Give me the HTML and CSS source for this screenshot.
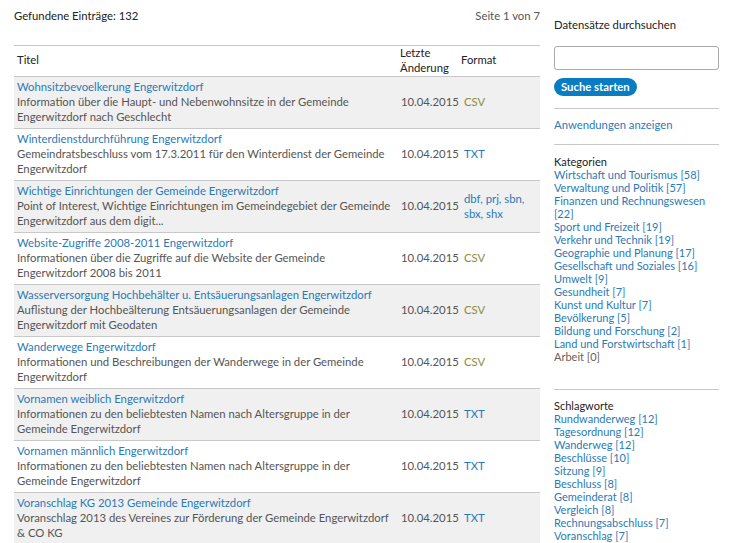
FILE: index.html
```html
<!DOCTYPE html>
<html lang="de">
<head>
<meta charset="utf-8">
<title>Datensätze</title>
<link rel="stylesheet" href="styles.css">
</head>
<body>
<div class="page">
  <main class="main">
    <div class="topbar">
      <span>Gefundene Einträge: 132</span>
      <span class="pages">Seite 1 von 7</span>
    </div>
    <table class="results">
      <thead>
        <tr><th class="c-title">Titel</th><th class="c-date">Letzte Änderung</th><th class="c-fmt">Format</th></tr>
      </thead>
      <tbody>
        <tr class="odd"><td><a>Wohnsitzbevoelkerung Engerwitzdorf</a><br>Information über die Haupt- und Nebenwohnsitze in der Gemeinde Engerwitzdorf nach Geschlecht</td><td>10.04.2015</td><td class="f-csv">CSV</td></tr>
        <tr><td><a>Winterdienstdurchführung Engerwitzdorf</a><br>Gemeindratsbeschluss vom 17.3.2011 für den Winterdienst der Gemeinde Engerwitzdorf</td><td>10.04.2015</td><td class="f-blue">TXT</td></tr>
        <tr class="odd"><td><a>Wichtige Einrichtungen der Gemeinde Engerwitzdorf</a><br>Point of Interest, Wichtige Einrichtungen im Gemeindegebiet der Gemeinde Engerwitzdorf aus dem digit...</td><td>10.04.2015</td><td class="f-blue">dbf, prj, sbn, sbx, shx</td></tr>
        <tr><td><a>Website-Zugriffe 2008-2011 Engerwitzdorf</a><br>Informationen über die Zugriffe auf die Website der Gemeinde Engerwitzdorf 2008 bis 2011</td><td>10.04.2015</td><td class="f-csv">CSV</td></tr>
        <tr class="odd"><td><a>Wasserversorgung Hochbehälter u. Entsäuerungsanlagen Engerwitzdorf</a><br>Auflistung der Hochbeälterung Entsäuerungsanlagen der Gemeinde Engerwitzdorf mit Geodaten</td><td>10.04.2015</td><td class="f-csv">CSV</td></tr>
        <tr><td><a>Wanderwege Engerwitzdorf</a><br>Informationen und Beschreibungen der Wanderwege in der Gemeinde Engerwitzdorf</td><td>10.04.2015</td><td class="f-csv">CSV</td></tr>
        <tr class="odd"><td><a>Vornamen weiblich Engerwitzdorf</a><br>Informationen zu den beliebtesten Namen nach Altersgruppe in der Gemeinde Engerwitzdorf</td><td>10.04.2015</td><td class="f-blue">TXT</td></tr>
        <tr><td><a>Vornamen männlich Engerwitzdorf</a><br>Informationen zu den beliebtesten Namen nach Altersgruppe in der Gemeinde Engerwitzdorf</td><td>10.04.2015</td><td class="f-blue">TXT</td></tr>
        <tr class="odd"><td><a>Voranschlag KG 2013 Gemeinde Engerwitzdorf</a><br>Voranschlag 2013 des Vereines zur Förderung der Gemeinde Engerwitzdorf &amp; CO KG</td><td>10.04.2015</td><td class="f-blue">TXT</td></tr>
      </tbody>
    </table>
  </main>
  <aside class="side">
    <div class="side-title">Datensätze durchsuchen</div>
    <input class="search" type="text">
    <button class="btn">Suche starten</button>
    <hr class="rule">
    <a class="side-link">Anwendungen anzeigen</a>
    <hr class="rule">
    <div class="block">
      <div class="block-title">Kategorien</div>
      <ul class="list">
        <li><a>Wirtschaft und Tourismus [58]</a></li>
        <li><a>Verwaltung und Politik [57]</a></li>
        <li><a>Finanzen und Rechnungswesen [22]</a></li>
        <li><a>Sport und Freizeit [19]</a></li>
        <li><a>Verkehr und Technik [19]</a></li>
        <li><a>Geographie und Planung [17]</a></li>
        <li><a>Gesellschaft und Soziales [16]</a></li>
        <li><a>Umwelt [9]</a></li>
        <li><a>Gesundheit [7]</a></li>
        <li><a>Kunst und Kultur [7]</a></li>
        <li><a>Bevölkerung [5]</a></li>
        <li><a>Bildung und Forschung [2]</a></li>
        <li><a>Land und Forstwirtschaft [1]</a></li>
        <li class="empty">Arbeit [0]</li>
      </ul>
    </div>
    <hr class="rule rule-wide">
    <div class="block block-tags">
      <div class="block-title">Schlagworte</div>
      <ul class="list">
        <li><a>Rundwanderweg [12]</a></li>
        <li><a>Tagesordnung [12]</a></li>
        <li><a>Wanderweg [12]</a></li>
        <li><a>Beschlüsse [10]</a></li>
        <li><a>Sitzung [9]</a></li>
        <li><a>Beschluss [8]</a></li>
        <li><a>Gemeinderat [8]</a></li>
        <li><a>Vergleich [8]</a></li>
        <li><a>Rechnungsabschluss [7]</a></li>
        <li><a>Voranschlag [7]</a></li>
      </ul>
    </div>
  </aside>
</div>
</body>
</html>
```
FILE: styles.css
```css
* { box-sizing: border-box; }
html, body { margin: 0; padding: 0; background: #fff; }
body {
  font-family: Lato, "Liberation Sans", sans-serif;
  font-size: 11.3px;
  color: #222;
  overflow: hidden;
}
a { color: #2a7ab8; text-decoration: none; }
.page {
  display: flex;
  align-items: flex-start;
  padding: 9px 0 0 14px;
}
.main { width: 526px; }
.topbar {
  display: flex;
  justify-content: space-between;
  line-height: 14px;
  height: 36px;
}
.pages { color: #555; }
.results {
  width: 526px;
  border-collapse: collapse;
  border-top: 1px solid #c8c8c8;
  table-layout: fixed;
}
.results th {
  font-weight: normal;
  text-align: left;
  line-height: 14.5px;
  padding: 0 3px 1px;
  color: #222;
  vertical-align: middle;
  border-bottom: 1px solid #c8c8c8;
}
.c-title { width: 384px; }
.results th.c-date {
  width: 60px;
  padding: 0 2px 1px 2px;
}
.results td {
  padding: 2px 3px 4px;
  line-height: 15px;
  color: #555;
  vertical-align: middle;
  border-bottom: 1px solid #c8c8c8;
}
.results tr.odd td { background: #f0f0f0; }
.results td.f-csv { color: #8c8c3c; padding-left: 6px; }
.results td.f-blue { color: #2a7ab8; padding-left: 6px; }
.side {
  width: 165px;
  margin-left: 14px;
  padding-top: 9px;
  display: flex;
  flex-direction: column;
}
.side-title { line-height: 14px; }
.search {
  margin-top: 14px;
  width: 165px;
  height: 24px;
  border: 1px solid #aaa;
  border-radius: 3px;
  background: #fff;
}
.btn {
  margin-top: 8px;
  align-self: flex-start;
  height: 18px;
  padding: 0 7px;
  border: none;
  border-radius: 9px;
  background: #0a7dc2;
  color: #fff;
  font-family: inherit;
  font-size: 11.3px;
  font-weight: bold;
  line-height: 18px;
}
.rule {
  margin: 12px 0 0;
  width: 165px;
  border: none;
  border-top: 1px solid #c8c8c8;
  height: 0;
}
.side-link { margin-top: 9px; line-height: 14px; }
.side-link + .rule { margin-top: 12px; }
.block { margin-top: 10px; font-size: 11px; }
.block-tags { margin-top: 9px; }
.block-title { line-height: 13px; color: #222; }
.list { list-style: none; margin: 0; padding: 0; }
.list li { line-height: 13px; }
.list li.empty { color: #6b5e55; }
.rule-wide { margin-top: 26px; }
```
